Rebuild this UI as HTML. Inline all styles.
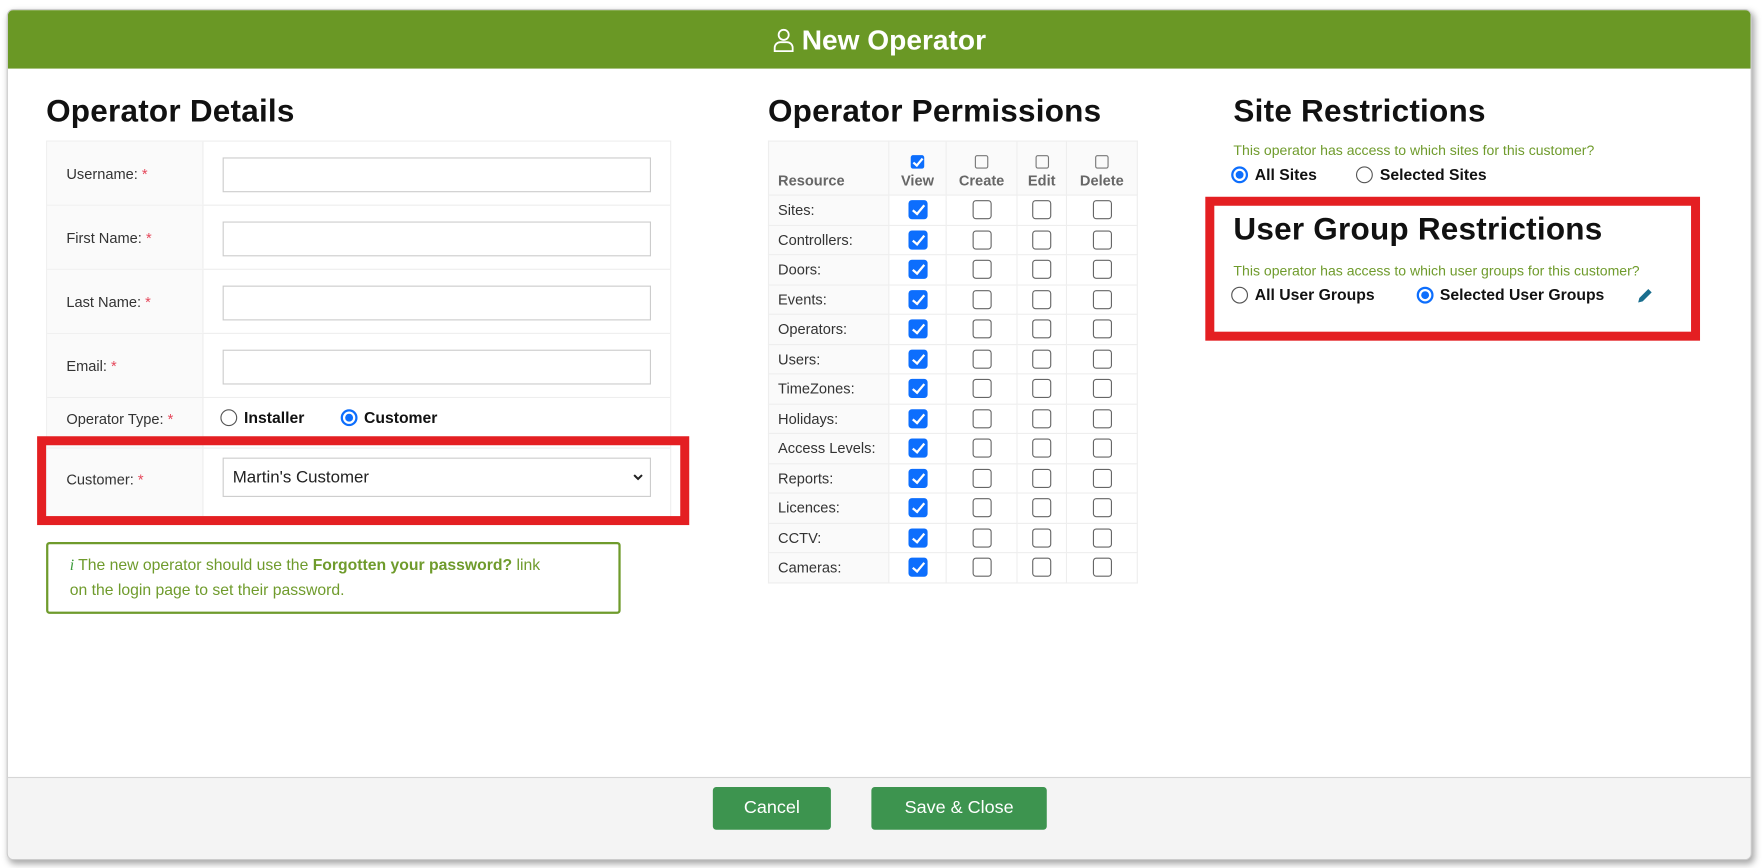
<!DOCTYPE html>
<html><head><meta charset="utf-8"><style>
*{box-sizing:border-box;margin:0;padding:0}
html,body{width:1763px;height:868px;overflow:hidden;background:#fff;font-family:"Liberation Sans",sans-serif;color:#222}
#w{position:absolute;left:0;top:0;width:1568px;height:772px;transform:scale(1.12436);transform-origin:0 0}
.modal{position:absolute;left:6px;top:8px;width:1552px;height:757px;border:1px solid #ccc;border-radius:6px;box-shadow:2px 3px 6px rgba(0,0,0,.35);background:#fff;overflow:hidden}
.hdr{position:absolute;left:0;top:0;right:0;height:52px;background:#6a9825;color:#fff;font-weight:bold;font-size:25px;text-align:center;line-height:54px}
.hdr svg{vertical-align:-3px;margin-right:6px}
.ftr{position:absolute;left:0;right:0;bottom:0;height:73px;background:#f4f4f4;border-top:1px solid #d6d6d6}
.btn{position:absolute;top:8px;height:38px;background:#3d944f;color:#fff;font-size:16px;text-align:center;line-height:38px;border-radius:3px}
.a{position:absolute}
h2{position:absolute;font-size:28px;font-weight:bold;color:#111;letter-spacing:0.2px}
.tbl{position:absolute;left:41px;top:125px;width:556px;border:1px solid #eee}
.row{position:relative;height:57px;border-bottom:1px solid #eee}
.row .l{position:absolute;left:0;top:0;bottom:0;width:139px;background:#fafafa;border-right:1px solid #eee;font-size:13px;color:#333;padding-left:17px;line-height:57px}
.st{color:#e5485b}
.inp{position:absolute;left:156px;top:14px;width:381px;height:31px;border:1px solid #ccc;background:#fff}
.rad{display:inline-block;width:15px;height:15px;border:1px solid #555;border-radius:50%;vertical-align:-3px;margin-right:6px;background:#fff}
.rad.on{border:2px solid #0d6efd;position:relative}
.rad.on:after{content:"";position:absolute;left:2px;top:2px;width:7px;height:7px;border-radius:50%;background:#0d6efd}
.red{position:absolute;border:8px solid #e41f22}
.ptbl{position:absolute;left:683px;top:125px;border-collapse:collapse;font-size:13px}
.ptbl td{border:1px solid #eee;height:26.5px;text-align:center;padding:0}
.ptbl td:first-child{text-align:left;padding-left:8px;background:#fafafa;color:#333}
.cb{display:inline-block;width:17px;height:17px;border:1.5px solid #666;border-radius:3px;vertical-align:middle}
.cb.on{background:#0d6efd;border-color:#0d6efd;position:relative}
.cb.on:after{content:"";position:absolute;left:5px;top:1px;width:4px;height:9px;border:solid #fff;border-width:0 2px 2px 0;transform:rotate(40deg)}
.ptbl th{font-weight:bold;color:#666;font-size:13px;height:48px;vertical-align:bottom;padding-bottom:5px;border:1px solid #eee;background:#fafafa}
.sm{display:inline-block;width:12px;height:12px;border:1px solid #777;border-radius:2px;position:relative}
.sm.on{background:#0d6efd;border-color:#0d6efd}
.sm.on:after{content:"";position:absolute;left:3px;top:0;width:3px;height:7px;border:solid #fff;border-width:0 2px 2px 0;transform:rotate(40deg)}
.g{color:#6f9b2c;font-size:12.5px}
.rl{font-size:14px;font-weight:bold;color:#111}
</style></head><body><div id="w">
<div class="modal">
<div class="hdr"><svg width="20" height="22" viewBox="0 0 20 22" fill="none" stroke="#fff" stroke-width="1.6"><circle cx="10" cy="6" r="4.5"/><path d="M2 20.5v-3a5 5 0 0 1 5-5h6a5 5 0 0 1 5 5v3z"/></svg>New Operator</div>
<div class="ftr"><div class="btn" style="left:627px;width:105px">Cancel</div><div class="btn" style="left:768px;width:156px">Save &amp; Close</div></div>
</div>
<h2 style="left:41px;top:83px">Operator Details</h2>
<div class="tbl">
<div class="row"><div class="l">Username: <span class="st">*</span></div><div class="inp"></div></div>
<div class="row"><div class="l">First Name: <span class="st">*</span></div><div class="inp"></div></div>
<div class="row"><div class="l">Last Name: <span class="st">*</span></div><div class="inp"></div></div>
<div class="row"><div class="l">Email: <span class="st">*</span></div><div class="inp"></div></div>
<div class="row" style="height:45px"><div class="l" style="line-height:38px">Operator Type: <span class="st">*</span></div><div class="a rl" style="left:154px;top:9px"><span class="rad"></span>Installer<span style="display:inline-block;width:32px"></span><span class="rad on"></span>Customer</div></div>
<div class="row" style="height:60px;border-bottom:0"><div class="l" style="line-height:56px">Customer: <span class="st">*</span></div><div class="inp" style="top:8px;height:35px;font-size:15px;color:#222;line-height:33px;padding-left:8px">Martin's Customer<svg class="a" style="right:6px;top:12px" width="9" height="9" viewBox="0 0 9 9"><path d="M1 2.5l3.5 3.5 3.5-3.5" stroke="#222" stroke-width="1.8" fill="none"/></svg></div></div>
</div>
<div class="red" style="left:33px;top:388px;width:580px;height:79px"></div>
<div class="a" style="left:41px;top:482px;width:511px;height:64px;border:2px solid #6f9b2c;border-radius:3px;padding:8px 0 0 19px;font-size:14px;color:#6f9b2c;line-height:21px"><i style="font-family:'Liberation Serif',serif;color:#3a9a3a">i</i> The new operator should use the <b>Forgotten your password?</b> link<br>on the login page to set their password.</div>

<h2 style="left:683px;top:83px">Operator Permissions</h2>
<table class="ptbl">
<tr><th style="width:107px;text-align:left;padding-left:8px">Resource</th><th style="width:51px"><span class="sm on"></span><br>View</th><th style="width:63px"><span class="sm"></span><br>Create</th><th style="width:44px"><span class="sm"></span><br>Edit</th><th style="width:63px"><span class="sm"></span><br>Delete</th></tr>
<tr><td>Sites:</td><td><span class="cb on"></span></td><td><span class="cb"></span></td><td><span class="cb"></span></td><td><span class="cb"></span></td></tr>
<tr><td>Controllers:</td><td><span class="cb on"></span></td><td><span class="cb"></span></td><td><span class="cb"></span></td><td><span class="cb"></span></td></tr>
<tr><td>Doors:</td><td><span class="cb on"></span></td><td><span class="cb"></span></td><td><span class="cb"></span></td><td><span class="cb"></span></td></tr>
<tr><td>Events:</td><td><span class="cb on"></span></td><td><span class="cb"></span></td><td><span class="cb"></span></td><td><span class="cb"></span></td></tr>
<tr><td>Operators:</td><td><span class="cb on"></span></td><td><span class="cb"></span></td><td><span class="cb"></span></td><td><span class="cb"></span></td></tr>
<tr><td>Users:</td><td><span class="cb on"></span></td><td><span class="cb"></span></td><td><span class="cb"></span></td><td><span class="cb"></span></td></tr>
<tr><td>TimeZones:</td><td><span class="cb on"></span></td><td><span class="cb"></span></td><td><span class="cb"></span></td><td><span class="cb"></span></td></tr>
<tr><td>Holidays:</td><td><span class="cb on"></span></td><td><span class="cb"></span></td><td><span class="cb"></span></td><td><span class="cb"></span></td></tr>
<tr><td>Access Levels:</td><td><span class="cb on"></span></td><td><span class="cb"></span></td><td><span class="cb"></span></td><td><span class="cb"></span></td></tr>
<tr><td>Reports:</td><td><span class="cb on"></span></td><td><span class="cb"></span></td><td><span class="cb"></span></td><td><span class="cb"></span></td></tr>
<tr><td>Licences:</td><td><span class="cb on"></span></td><td><span class="cb"></span></td><td><span class="cb"></span></td><td><span class="cb"></span></td></tr>
<tr><td>CCTV:</td><td><span class="cb on"></span></td><td><span class="cb"></span></td><td><span class="cb"></span></td><td><span class="cb"></span></td></tr>
<tr><td>Cameras:</td><td><span class="cb on"></span></td><td><span class="cb"></span></td><td><span class="cb"></span></td><td><span class="cb"></span></td></tr>
</table>

<h2 style="left:1097px;top:83px">Site Restrictions</h2>
<div class="a g" style="left:1097px;top:127px">This operator has access to which sites for this customer?</div>
<div class="a rl" style="left:1095px;top:147px"><span class="rad on"></span>All Sites<span style="display:inline-block;width:35px"></span><span class="rad"></span>Selected Sites</div>
<div class="red" style="left:1072px;top:175px;width:440px;height:128px"></div>
<h2 style="left:1097px;top:188px">User Group Restrictions</h2>
<div class="a g" style="left:1097px;top:234px">This operator has access to which user groups for this customer?</div>
<div class="a rl" style="left:1095px;top:254px"><span class="rad"></span>All User Groups<span style="display:inline-block;width:37px"></span><span class="rad on"></span>Selected User Groups</div>
<svg class="a" style="left:1455px;top:255px" width="16" height="16" viewBox="0 0 16 16"><path d="M2 14l1-4 8-8 3 3-8 8z" fill="#1a6e8e"/></svg>
</div></body></html>
